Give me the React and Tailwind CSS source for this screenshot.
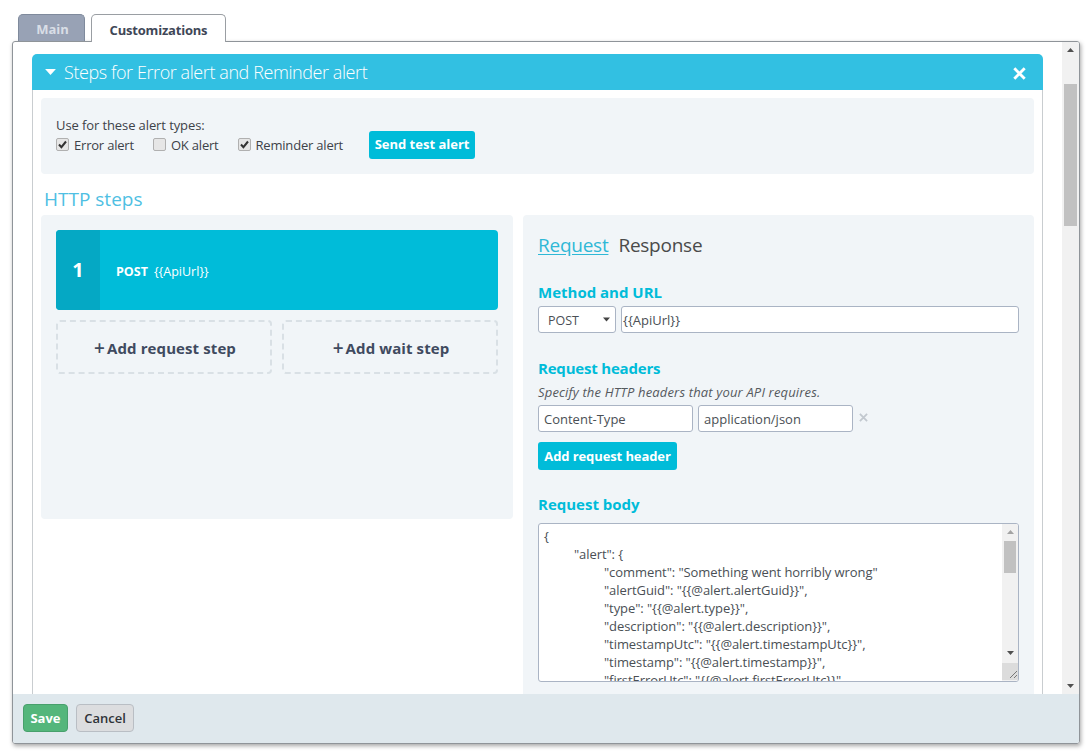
const bodyLines = [
  { indent: 0, text: "{" },
  { indent: 1, text: '"alert": {' },
  { indent: 2, text: '"comment": "Something went horribly wrong"' },
  { indent: 2, text: '"alertGuid": "{{@alert.alertGuid}}",' },
  { indent: 2, text: '"type": "{{@alert.type}}",' },
  { indent: 2, text: '"description": "{{@alert.description}}",' },
  { indent: 2, text: '"timestampUtc": "{{@alert.timestampUtc}}",' },
  { indent: 2, text: '"timestamp": "{{@alert.timestamp}}",' },
  { indent: 2, text: '"firstErrorUtc": "{{@alert.firstErrorUtc}}"' },
];

const indentClass = ["pl-0", "pl-[30px]", "pl-[60px]"];

function Checkbox({ label, checked }) {
  return (
    <label className="flex items-center">
      <span className="-mt-[3px] flex h-[13px] w-[13px] items-center justify-center rounded-[2px] border border-[#b0b0b0] bg-[#e6e6e6]">
        {checked ? (
          <svg width="9" height="9" viewBox="0 0 9 9">
            <path d="M1 4.5 L3.4 7.2 L8 1.5" fill="none" stroke="#333" strokeWidth="2" />
          </svg>
        ) : null}
      </span>
      <span className="ml-[5px] tracking-[-0.2px]">{label}</span>
    </label>
  );
}

function Arrow({ up, className }) {
  return (
    <svg width="9" height="5" viewBox="0 0 9 5" className={className}>
      <path d={up ? "M0 5 L4.5 0 L9 5 Z" : "M0 0 L4.5 5 L9 0 Z"} fill="currentColor" />
    </svg>
  );
}

function Cross({ size, color, width }) {
  return (
    <svg width={size} height={size} viewBox="0 0 10 10">
      <path d="M1 1 L9 9 M9 1 L1 9" stroke={color} strokeWidth={width} fill="none" />
    </svg>
  );
}

function SectionLabel({ children, className }) {
  return <div className={"text-[15px] leading-[20px] font-bold text-[#00bcd9] " + className}>{children}</div>;
}

function TextBox({ value, className }) {
  return (
    <div className={"flex h-[27px] items-center rounded-[3px] border border-[#aab4c4] bg-white pt-[2px] text-[13px] text-[#4a4f55] " + className}>
      {value}
    </div>
  );
}

function AddStep({ label }) {
  return (
    <button className="flex h-[54px] w-[216px] items-center justify-center rounded-[4px] border-2 border-dashed border-[#d9e0e5] pt-[2px] pl-[2px] text-[15px] font-bold tracking-[0.1px] text-[#3f4a5f]">
      <span className="mr-[2px] text-[19px] leading-none font-semibold">+</span>
      {label}
    </button>
  );
}

export default function App() {
  return (
    <div className="h-[756px] w-[1091px] overflow-hidden bg-white pt-[14px] pl-[12px] font-['Open_Sans',sans-serif] text-[13px] text-[#3d4249]">
      <div className="relative z-10 flex h-[28px] items-start pl-[6px]">
        <div className="flex h-[27px] w-[67px] items-center justify-center rounded-t-[5px] border border-b-0 border-[#7f8a9c] bg-[#98a2b5] pt-[3px] pl-[2px] font-bold text-[#d9dee6]">
          Main
        </div>
        <div className="ml-[6px] flex h-[28px] w-[135px] items-center justify-center rounded-t-[5px] border border-b-0 border-[#9a9ea3] bg-white pt-[4px] font-bold tracking-[-0.2px] text-[#3f4757]">
          Customizations
        </div>
      </div>

      <div className="-mt-px flex h-[703px] w-[1068px] flex-col overflow-hidden rounded-[3px] border border-[#8f9499] shadow-[1px_2px_4px_rgba(0,0,0,0.35)]">
        <div className="flex min-h-0 flex-1">
          <div className="min-w-0 flex-1 overflow-hidden pt-[12px] pl-[19px]">
            <div className="flex h-[36px] w-[1011px] items-center justify-between rounded-t-[5px] bg-[#32c0e2] pr-[17px] pl-[13px] text-white">
              <div className="flex items-center">
                <Arrow className="h-[6px] w-[11px]" />
                <span className="ml-[8px] text-[18px] leading-none font-light tracking-[-0.42px]">Steps for Error alert and Reminder alert</span>
              </div>
              <div className="mt-[3px]"><Cross size={13} color="#fff" width={2.2} /></div>
            </div>

            <div className="h-[620px] w-[1011px] border-x border-[#c9cdd0] px-[8px] pt-[8px]">
              <div className="h-[76px] rounded-[4px] bg-[#f1f5f8] pt-[18px] pl-[15px]">
                <div className="leading-[18px] tracking-[-0.1px]">Use for these alert types:</div>
                <div className="-mt-[2px] flex items-center">
                  <Checkbox label="Error alert" checked />
                  <div className="ml-[19px]"><Checkbox label="OK alert" /></div>
                  <div className="ml-[19px]"><Checkbox label="Reminder alert" checked /></div>
                  <button className="-mt-[1px] ml-[26px] h-[28px] w-[106px] rounded-[3px] bg-[#00bcd9] font-bold text-white">
                    Send test alert
                  </button>
                </div>
              </div>

              <div className="mt-[12px] pl-[3px] text-[19px] leading-[26px] text-[#4fbfe3]">HTTP steps</div>

              <div className="mt-[3px] flex gap-[10px]">
                <div className="h-[304px] w-[472px] rounded-[4px] bg-[#f1f5f8] px-[15px] pt-[15px]">
                  <div className="flex h-[80px] overflow-hidden rounded-[4px] bg-[#00bcd9] text-white">
                    <div className="flex w-[44px] items-center justify-center bg-[#05a8c4] text-[20px] font-bold">1</div>
                    <div className="ml-[16px] flex items-center pt-[4px] text-[12.5px]">
                      <span className="font-bold">POST</span>
                      <span className="ml-[6px]">{"{{ApiUrl}}"}</span>
                    </div>
                  </div>
                  <div className="mt-[10px] flex gap-[10px]">
                    <AddStep label="Add request step" />
                    <AddStep label="Add wait step" />
                  </div>
                </div>

                <div className="h-[500px] w-[511px] rounded-[4px] bg-[#f1f5f8] pt-[15px] pl-[15px]">
                  <div className="flex text-[19px] leading-[30px] tracking-[-0.25px]">
                    <span className="text-[#2fb8d6] underline underline-offset-2">Request</span>
                    <span className="ml-[10px] text-[#4a4a4a]">Response</span>
                  </div>

                  <SectionLabel className="mt-[22px]">Method and URL</SectionLabel>
                  <div className="mt-[4px] flex">
                    <div className="flex h-[27px] w-[78px] items-center justify-between rounded-[3px] border border-[#aab4c4] bg-white pt-[3px] pr-[5px] pl-[9px] text-[12.5px] text-[#4a4f55]">
                      POST
                      <Arrow className="-mt-[4px] h-[5px] w-[7px] text-[#444]" />
                    </div>
                    <TextBox value="{{ApiUrl}}" className="ml-[5px] w-[398px] pl-[1px]" />
                  </div>

                  <SectionLabel className="mt-[25px] tracking-[-0.2px]">Request headers</SectionLabel>
                  <div className="mt-[5px] text-[13px] leading-[18px] tracking-[0.16px] text-[#55595e] italic">
                    Specify the HTTP headers that your API requires.
                  </div>
                  <div className="mt-[4px] flex items-center">
                    <TextBox value="Content-Type" className="w-[155px] pl-[5px]" />
                    <TextBox value="application/json" className="ml-[5px] w-[155px] pl-[5px]" />
                    <div className="ml-[6px] -mt-[3px]"><Cross size={9} color="#c2c8cf" width={2} /></div>
                  </div>
                  <button className="mt-[10px] h-[28px] w-[139px] rounded-[3px] bg-[#00bcd9] pt-[1px] font-bold tracking-[-0.1px] text-white">
                    Add request header
                  </button>

                  <SectionLabel className="mt-[24px]">Request body</SectionLabel>
                  <div className="mt-[9px] flex h-[159px] w-[481px] overflow-hidden rounded-[3px] border border-[#aab4c4] bg-white">
                    <div className="h-[157px] min-w-0 flex-1 overflow-hidden pt-[3px] pl-[5px] text-[13px] leading-[18px] tracking-[-0.07px] whitespace-pre text-[#4a4f55]">
                      {bodyLines.map((line) => (
                        <div key={line.text} className={indentClass[line.indent]}>{line.text}</div>
                      ))}
                    </div>
                    <div className="flex w-[16px] flex-col items-center bg-[#f1f1f1]">
                      <Arrow up className="mt-[6px] h-[4px] w-[7px] text-[#a3a3a3]" />
                      <div className="mt-[7px] h-[32px] w-[12px] bg-[#c1c1c1]" />
                      <Arrow className="mt-[78px] h-[4px] w-[7px] text-[#505050]" />
                      <div className="relative mt-[8px] h-[17px] w-full bg-[#dcdcdc]">
                        <svg width="16" height="17" viewBox="0 0 16 17" className="absolute inset-0">
                          <path d="M8 15 L15 8 M12 15 L15 12" stroke="#777" strokeWidth="1" />
                        </svg>
                      </div>
                    </div>
                  </div>
                </div>
              </div>
            </div>
          </div>

          <div className="flex w-[17px] flex-col items-center bg-[#f1f1f1]">
            <Arrow up className="mt-[6px] h-[4px] w-[7px] text-[#505050]" />
            <div className="mt-[32px] h-[142px] w-[13px] bg-[#c1c1c1]" />
            <div className="flex-1" />
            <Arrow className="mb-[6px] h-[4px] w-[7px] text-[#505050]" />
          </div>
        </div>

        <div className="flex h-[49px] items-start gap-[8px] bg-[#dfe8ed] pt-[10px] pl-[10px]">
          <button className="h-[28px] w-[45px] rounded-[4px] border border-[#48a06c] bg-[#54b67b] pt-[1px] font-bold text-white">
            Save
          </button>
          <button className="h-[28px] w-[58px] rounded-[4px] border border-[#b9bec4] bg-[#dcdddf] pt-[1px] font-semibold text-[#2f3338]">
            Cancel
          </button>
        </div>
      </div>
    </div>
  );
}
